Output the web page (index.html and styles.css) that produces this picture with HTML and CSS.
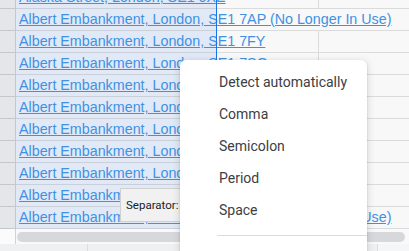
FILE: index.html
```html
<!DOCTYPE html>
<html lang="en">
<head>
    <meta charset="UTF-8">
    <meta name="viewport" content="width=device-width, initial-scale=1.0">
    <title>Split text to columns</title>
    <link rel="stylesheet" href="styles.css">
</head>
<body>

    <div class="sheet">
        <div class="grid">
            <div class="row"><div class="hdr"></div><div class="cell sel"><a href="#">Alaska Street, London, SE1 0XE</a></div><div class="cell col-c"></div><div class="cell col-d"></div></div>
            <div class="row spill"><div class="hdr"></div><div class="cell sel"><a href="#">Albert Embankment, London, SE1 7AP (No Longer In Use)</a></div><div class="cell col-c"></div><div class="cell col-d"></div></div>
            <div class="row"><div class="hdr"></div><div class="cell sel"><a href="#">Albert Embankment, London, SE1 7FY</a></div><div class="cell col-c"></div><div class="cell col-d"></div></div>
            <div class="row"><div class="hdr"></div><div class="cell sel"><a href="#">Albert Embankment, London, SE1 7SG</a></div><div class="cell col-c"></div><div class="cell col-d"></div></div>
            <div class="row"><div class="hdr"></div><div class="cell sel"><a href="#">Albert Embankment, London, SE1 7SP</a></div><div class="cell col-c"></div><div class="cell col-d"></div></div>
            <div class="row"><div class="hdr"></div><div class="cell sel"><a href="#">Albert Embankment, London, SE1 7TJ</a></div><div class="cell col-c"></div><div class="cell col-d"></div></div>
            <div class="row"><div class="hdr"></div><div class="cell sel"><a href="#">Albert Embankment, London, SE1 7TP</a></div><div class="cell col-c"></div><div class="cell col-d"></div></div>
            <div class="row"><div class="hdr"></div><div class="cell sel"><a href="#">Albert Embankment, London, SE1 7TY</a></div><div class="cell col-c"></div><div class="cell col-d"></div></div>
            <div class="row"><div class="hdr"></div><div class="cell sel"><a href="#">Albert Embankment, London, SE1 7UF</a></div><div class="cell col-c"></div><div class="cell col-d"></div></div>
            <div class="row"><div class="hdr"></div><div class="cell sel"><a href="#">Albert Embankment, London, SE1 7XN</a></div><div class="cell col-c"></div><div class="cell col-d"></div></div>
            <div class="row spill"><div class="hdr"></div><div class="cell sel"><a href="#">Albert Embankment, London, SE1 7AP (No Longer In Use)</a></div><div class="cell col-c"></div><div class="cell col-d"></div></div>
        </div>

        <div class="hscroll">
            <div class="corner"></div>
            <div class="thumb"></div>
        </div>

        <div class="tabs">
            <div class="tab-add"></div>
            <div class="tab-list"></div>
            <div class="tab-end"></div>
        </div>

        <div class="split-box">Separator:</div>

        <div class="menu">
            <div class="menu-item">Detect automatically</div>
            <div class="menu-item">Comma</div>
            <div class="menu-item">Semicolon</div>
            <div class="menu-item">Period</div>
            <div class="menu-item">Space</div>
            <div class="menu-sep"></div>
        </div>
    </div>

</body>
</html>
```

FILE: styles.css
```css
* {
    box-sizing: border-box;
}

body {
    margin: 0;
    background: #f8f8f8;
    font-family: "Liberation Sans", Arial, sans-serif;
    overflow: hidden;
}

.sheet {
    position: relative;
    width: 409px;
    height: 251px;
    overflow: hidden;
}

.grid {
    margin-top: -13px;
}

.row {
    display: flex;
    height: 22px;
}

.hdr {
    flex: none;
    width: 16px;
    height: 22px;
    background: #e5e6e9;
    border-right: 1px solid #c4c7cb;
    border-bottom: 1px solid #c4c7cb;
}

.cell {
    flex: none;
    height: 22px;
    border-bottom: 1px solid #dadbdd;
}

.sel {
    position: relative;
    width: 201px;
    padding-left: 3px;
    background: #e1e9f6;
    border-bottom-color: #c9d0da;
    white-space: nowrap;
    overflow: visible;
}

/* selection edge sits on top of the cell text */
.sel::after {
    content: "";
    position: absolute;
    top: 0;
    right: 0;
    bottom: -1px;
    width: 1px;
    background: #1a73e8;
}

.sel a {
    color: #3f91e4;
    text-decoration: underline;
    font-size: 14.3px;
    line-height: 21px;
}

.col-c {
    width: 102px;
    border-right: 1px solid #dadbdd;
}

.col-d {
    flex: 1;
}

.spill .col-c {
    border-right-color: transparent;
}

.hscroll {
    display: flex;
    height: 15px;
    background: #f9f9fa;
}

.corner {
    width: 16px;
    border-right: 1px solid #d0d2d5;
    background: #fbfbfb;
}

.thumb {
    flex: 1;
    height: 10px;
    margin: 3px 4px 0 1px;
    border-radius: 5px;
    background: #d7d8db;
}

.tabs {
    display: flex;
    height: 8px;
    background: #eff0f2;
}

.tab-add {
    width: 88px;
    border-right: 1px solid #dcdde0;
}

.tab-list {
    width: 290px;
    border-right: 1px solid #dcdde0;
}

.tab-end {
    flex: 1;
    background: #f5f6f7;
}

.split-box {
    position: absolute;
    left: 120px;
    top: 188px;
    width: 90px;
    height: 34px;
    padding-left: 5px;
    background: #f1f1f1;
    border: 1px solid #d0d0d0;
    font-family: Roboto, "Liberation Sans", sans-serif;
    font-size: 11.5px;
    line-height: 32px;
    color: #202124;
}

.menu {
    position: absolute;
    left: 180px;
    top: 60px;
    width: 187px;
    height: 230px;
    padding: 6px 0;
    background: #ffffff;
    border-radius: 6px;
    box-shadow: 0 1px 2px rgba(60, 64, 67, 0.25), 0 2px 6px 2px rgba(60, 64, 67, 0.12);
    font-family: Roboto, "Liberation Sans", sans-serif;
}

.menu-item {
    height: 32px;
    padding-left: 39px;
    font-size: 14px;
    line-height: 32px;
    color: #3c4043;
}

.menu-sep {
    margin: 9px 0 6px 37px;
    border-top: 1px solid #dadce0;
}
```
